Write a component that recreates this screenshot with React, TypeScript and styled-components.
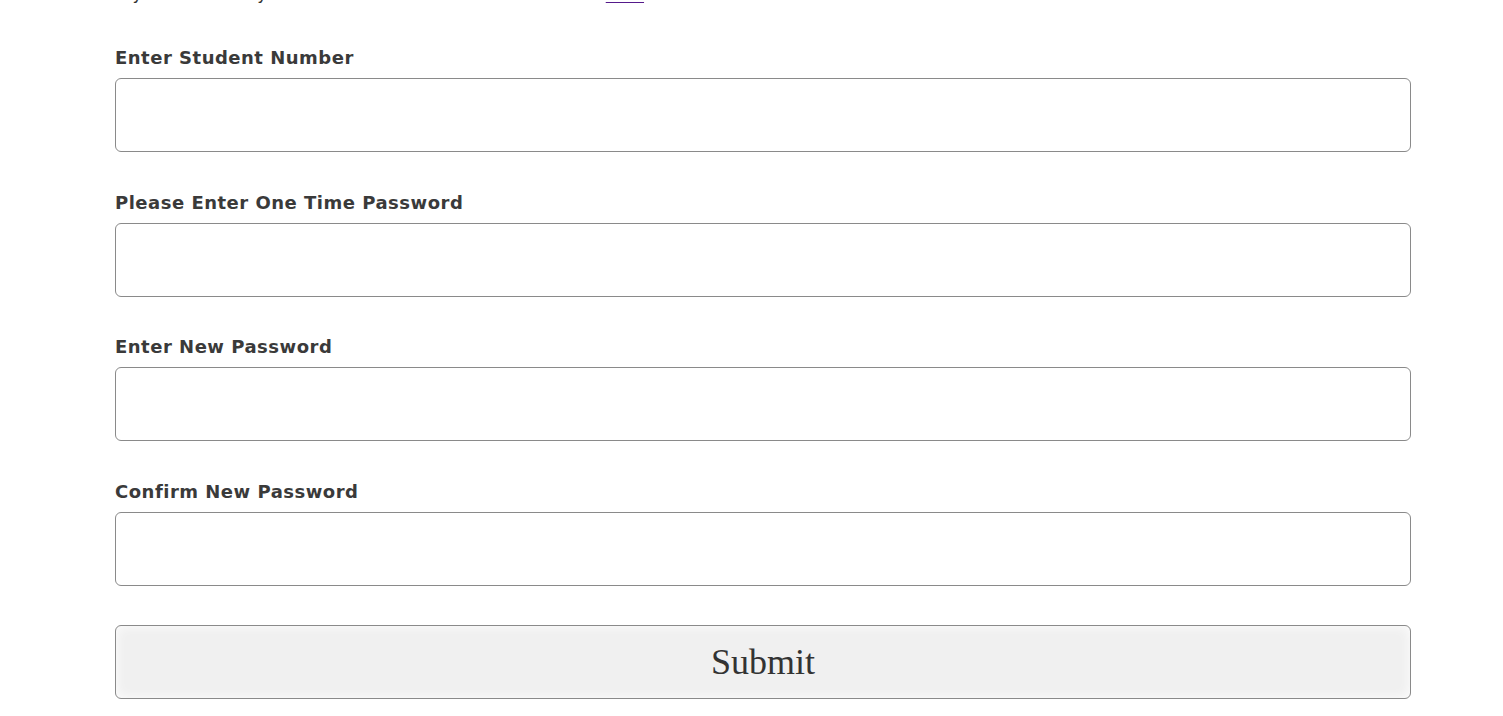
import styled, { createGlobalStyle } from "styled-components";

const GlobalStyle = createGlobalStyle`
  html, body {
    margin: 0;
    padding: 0;
    background: #ffffff;
  }
`;

const Page = styled.div`
  width: 1296px;
  padding-left: 115px;
  font-family: "DejaVu Sans", Verdana, sans-serif;
  color: #333333;
`;

const IntroClip = styled.div`
  height: 3px;
  overflow: hidden;
`;

const Intro = styled.p`
  margin: -16px 0 0 0;
  font-size: 17px;
  line-height: 18px;
  word-spacing: 1px;
  color: #333333;
  white-space: nowrap;

  a {
    color: #551a8b;
    text-decoration-thickness: 2px;
    text-underline-offset: 3px;
  }
`;

const Form = styled.form`
  display: flex;
  flex-direction: column;
  padding-top: 44px;
`;

const Field = styled.div`
  display: flex;
  flex-direction: column;
  margin-bottom: 39.6px;

  &:last-of-type {
    margin-bottom: 39px;
  }
`;

const Label = styled.label`
  font-size: 18px;
  font-weight: bold;
  letter-spacing: 0.5px;
  line-height: 22px;
  color: #3a3a3a;
  margin-bottom: 9px;
`;

const Input = styled.input`
  box-sizing: border-box;
  width: 100%;
  height: 74px;
  border: 1px solid #8a8a8a;
  border-radius: 6px;
  background: #ffffff;
  font-size: 18px;
  padding: 0 12px;
  outline: none;
`;

const SubmitButton = styled.button`
  box-sizing: border-box;
  width: 100%;
  height: 74px;
  border: 1px solid #8a8a8a;
  border-radius: 6px;
  background: #f0f0f0;
  box-shadow: inset 0 0 12px rgba(255, 255, 255, 0.9);
  font-family: "Liberation Serif", "Times New Roman", serif;
  font-size: 36px;
  color: #333333;
`;

const fields = [
  { id: "student", label: "Enter Student Number", type: "text" },
  { id: "otp", label: "Please Enter One Time Password", type: "text" },
  { id: "newpw", label: "Enter New Password", type: "password" },
  { id: "confirmpw", label: "Confirm New Password", type: "password" },
];

export default function App() {
  return (
    <Page>
      <GlobalStyle />
      <IntroClip>
        <Intro>
          If you are already enrolled with an account then reset it{" "}
          <a href="#">here</a>
        </Intro>
      </IntroClip>
      <Form onSubmit={(e) => e.preventDefault()}>
        {fields.map((f) => (
          <Field key={f.id}>
            <Label htmlFor={f.id}>{f.label}</Label>
            <Input id={f.id} type={f.type} />
          </Field>
        ))}
        <SubmitButton type="submit">Submit</SubmitButton>
      </Form>
    </Page>
  );
}
